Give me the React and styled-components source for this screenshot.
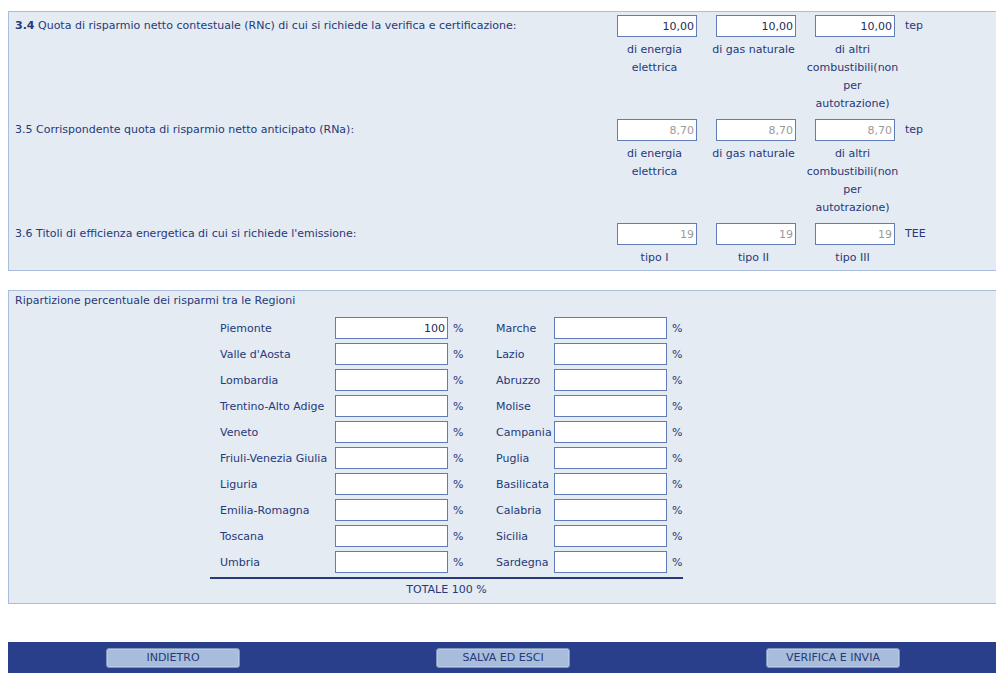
import React from "react";
import styled, { createGlobalStyle } from "styled-components";

const GlobalStyle = createGlobalStyle`
  body {
    margin: 8px;
    background: #ffffff;
    font-family: "DejaVu Sans", Verdana, sans-serif;
    font-size: 11px;
    color: #26397a;
  }
`;

const Page = styled.div`
  width: 990px;
  padding-top: 3px;
`;

const Panel = styled.div`
  background: #e4ebf2;
  border: 1px solid #a9bedc;
  padding: ${(p) => p.$pad || "3px 0 3px 0"};
  margin-bottom: ${(p) => p.$mb || "0"};
`;

const Section = styled.div`
  display: grid;
  grid-template-columns: 596px 99px 99px 99px 1fr;
  & + & {
    margin-top: 6px;
  }
`;

const Question = styled.div`
  padding-left: 6px;
  line-height: 22px;
  height: 22px;
  white-space: nowrap;
`;

const Num = styled.span`
  font-weight: ${(p) => (p.$bold ? "bold" : "normal")};
`;

const Cell = styled.div`
  display: flex;
  flex-direction: column;
`;

const Box = styled.input`
  box-sizing: border-box;
  width: 80px;
  height: 22px;
  margin-left: 12px;
  border: 1px solid #5f7cb8;
  background: #ffffff;
  text-align: right;
  padding: 0 2px;
  font-family: inherit;
  font-size: 11px;
  color: ${(p) => (p.readOnly ? "#9a9a9a" : "#1d2a5c")};
  outline: none;
`;

const Caption = styled.div`
  box-sizing: border-box;
  margin-top: 4px;
  width: 99px;
  padding: 0 3px;
  text-align: center;
  line-height: 18px;
`;

const Unit = styled.div`
  padding-left: 3px;
  line-height: 22px;
  height: 22px;
`;

const PanelTitle = styled.div`
  padding-left: 6px;
  line-height: 18px;
`;

const RegionTable = styled.div`
  margin: 5px 0 0 201px;
  width: 473px;
`;

const RegionRow = styled.div`
  display: grid;
  grid-template-columns: 125px 113px 48px 58px 113px 16px;
  height: 26px;
  align-items: center;
`;

const RegionName = styled.div`
  padding-left: ${(p) => (p.$second ? "0" : "10px")};
  white-space: nowrap;
`;

const RegionBox = styled(Box)`
  width: 113px;
  margin-left: 0;
  color: #1d2a5c;
`;

const Pct = styled.div`
  padding-left: 5px;
`;

const Total = styled.div`
  border-top: 2px solid #26397a;
  margin-top: 2px;
  text-align: center;
  line-height: 22px;
`;

const Footer = styled.div`
  margin-top: 38px;
  background: #293f8b;
  height: 31px;
  display: grid;
  grid-template-columns: 1fr 1fr 1fr;
  align-items: center;
  justify-items: center;
`;

const Button = styled.button`
  width: 134px;
  height: 20px;
  background: #a8bddb;
  border: 1px solid #8194b9;
  border-radius: 3px;
  box-shadow: inset 0 0 0 1px #b9cbe4;
  font-family: inherit;
  font-size: 11px;
  color: #26397a;
  padding: 0;
  cursor: pointer;
`;

const sections = [
  {
    num: "3.4",
    bold: true,
    text: " Quota di risparmio netto contestuale (RNc) di cui si richiede la verifica e certificazione:",
    values: ["10,00", "10,00", "10,00"],
    readOnly: false,
    unit: "tep",
    captions: ["di energia elettrica", "di gas naturale", "di altri combustibili(non per autotrazione)"],
  },
  {
    num: "3.5",
    text: " Corrispondente quota di risparmio netto anticipato (RNa):",
    values: ["8,70", "8,70", "8,70"],
    readOnly: true,
    unit: "tep",
    captions: ["di energia elettrica", "di gas naturale", "di altri combustibili(non per autotrazione)"],
  },
  {
    num: "3.6",
    text: " Titoli di efficienza energetica di cui si richiede l'emissione:",
    values: ["19", "19", "19"],
    readOnly: true,
    unit: "TEE",
    captions: ["tipo I", "tipo II", "tipo III"],
  },
];

const regions = [
  ["Piemonte", "100", "Marche"],
  ["Valle d'Aosta", "", "Lazio"],
  ["Lombardia", "", "Abruzzo"],
  ["Trentino-Alto Adige", "", "Molise"],
  ["Veneto", "", "Campania"],
  ["Friuli-Venezia Giulia", "", "Puglia"],
  ["Liguria", "", "Basilicata"],
  ["Emilia-Romagna", "", "Calabria"],
  ["Toscana", "", "Sicilia"],
  ["Umbria", "", "Sardegna"],
];

export default function App() {
  return (
    <Page>
      <GlobalStyle />
      <Panel $mb="19px">
        {sections.map((s) => (
          <Section key={s.num}>
            <Question>
              <Num $bold={s.bold}>{s.num}</Num>
              {s.text}
            </Question>
            {s.values.map((v, i) => (
              <Cell key={i}>
                <Box defaultValue={v} readOnly={s.readOnly} />
                <Caption>{s.captions[i]}</Caption>
              </Cell>
            ))}
            <Unit>{s.unit}</Unit>
          </Section>
        ))}
      </Panel>

      <Panel $pad="1px 0 2px 0">
        <PanelTitle>Ripartizione percentuale dei risparmi tra le Regioni</PanelTitle>
        <RegionTable>
          {regions.map(([a, val, b]) => (
            <RegionRow key={a}>
              <RegionName>{a}</RegionName>
              <RegionBox defaultValue={val} />
              <Pct>%</Pct>
              <RegionName $second>{b}</RegionName>
              <RegionBox defaultValue="" />
              <Pct>%</Pct>
            </RegionRow>
          ))}
          <Total>TOTALE 100 %</Total>
        </RegionTable>
      </Panel>

      <Footer>
        <Button>INDIETRO</Button>
        <Button>SALVA ED ESCI</Button>
        <Button>VERIFICA E INVIA</Button>
      </Footer>
    </Page>
  );
}
